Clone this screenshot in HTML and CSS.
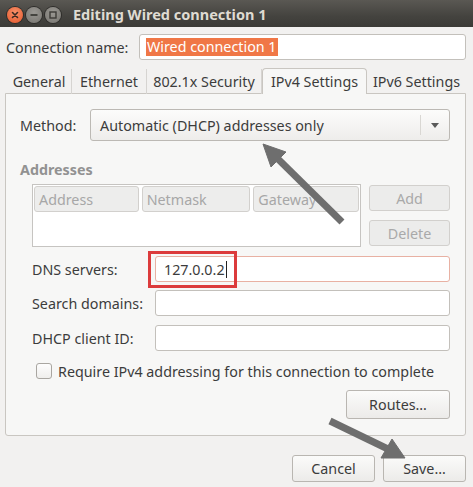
FILE: index.html
```html
<!DOCTYPE html>
<html>
<head>
<meta charset="utf-8">
<link rel="stylesheet" href="styles.css">
</head>
<body>
<div class="window">
  <div class="titlebar">
    <div class="wbtns">
      <span class="wbtn close"><svg width="16" height="16" viewBox="0 0 16 16"><path d="M5.5 5.5 L10.5 10.5 M10.5 5.5 L5.5 10.5" stroke="#3a2a22" stroke-width="1.6" stroke-linecap="round"/></svg></span>
      <span class="wbtn"><svg width="16" height="16" viewBox="0 0 16 16"><path d="M4.5 8 H11.5" stroke="#3c3b37" stroke-width="1.8"/></svg></span>
      <span class="wbtn"><svg width="16" height="16" viewBox="0 0 16 16"><rect x="5" y="5" width="6" height="6" fill="none" stroke="#3c3b37" stroke-width="1.4"/></svg></span>
    </div>
    <div class="title">Editing Wired connection 1</div>
  </div>
  <div class="main">
    <div class="name-row">
      <div class="name-label">Connection name:</div>
      <div class="entry name-entry"><span class="sel">Wired connection 1</span></div>
    </div>
    <div class="notebook">
      <div class="tabs">
        <div class="tab t-general">General</div>
        <div class="tab t-eth">Ethernet</div>
        <div class="tab t-sec">802.1x Security</div>
        <div class="tab active t-v4">IPv4 Settings</div>
        <div class="tab t-v6">IPv6 Settings</div>
      </div>
      <div class="panel">
        <div class="method-row">
          <div class="method-label">Method:</div>
          <div class="combo">
            <span class="combo-text">Automatic (DHCP) addresses only</span>
            <span class="combo-sep"></span>
            <span class="combo-arrow"></span>
          </div>
        </div>
        <div class="section-title">Addresses</div>
        <div class="addr-block">
          <div class="addr-table">
            <div class="addr-head">
              <div class="hcell c1">Address</div>
              <div class="hcell c2">Netmask</div>
              <div class="hcell c3">Gateway</div>
            </div>
          </div>
          <div class="addr-btns">
            <div class="btn disabled">Add</div>
            <div class="btn disabled">Delete</div>
          </div>
        </div>
        <div class="form">
          <div class="frow r1">
            <div class="flabel">DNS servers:</div>
            <div class="entry focus">127.0.0.2<span class="caret"></span></div>
          </div>
          <div class="frow r2">
            <div class="flabel">Search domains:</div>
            <div class="entry"></div>
          </div>
          <div class="frow r3">
            <div class="flabel">DHCP client ID:</div>
            <div class="entry"></div>
          </div>
        </div>
        <div class="check-row">
          <span class="checkbox"></span>
          <span class="check-label">Require IPv4 addressing for this connection to complete</span>
        </div>
        <div class="routes-row">
          <div class="btn routes">Routes…</div>
        </div>
      </div>
    </div>
    <div class="actions">
      <div class="btn act">Cancel</div>
      <div class="btn act">Save…</div>
    </div>
  </div>
  <div class="highlight"></div>
  <svg class="arrows" width="473" height="487" viewBox="0 0 473 487">
    <g fill="#6e6e6e" stroke="#6e6e6e">
      <line x1="342" y1="222" x2="276" y2="157" stroke-width="7"/>
      <polygon points="263,144 286,152 271,167" stroke-width="1"/>
      <line x1="330" y1="421" x2="390" y2="450" stroke-width="7"/>
      <polygon points="405,458 392,439 381,458" stroke-width="1"/>
    </g>
  </svg>
</div>
</body>
</html>
```
FILE: styles.css
```css
* { box-sizing: border-box; }
html, body { margin: 0; padding: 0; }
body {
  font-family: "Noto Sans", "DejaVu Sans", sans-serif;
  font-size: 14.3px;
  color: #3c3c3c;
  background: #f2f1f0;
}
.window {
  position: relative;
  width: 473px;
  height: 487px;
  overflow: hidden;
  background: #f2f1f0;
}
.titlebar {
  height: 27px;
  background: linear-gradient(#5a5853, #44433f 60%, #3c3b37);
  display: flex;
  align-items: center;
}
.wbtns {
  display: flex;
  gap: 3px;
  padding-left: 7px;
  padding-top: 2px;
}
.wbtn {
  width: 16px;
  height: 16px;
  border-radius: 50%;
  background: radial-gradient(circle at 50% 35%, #9a9893, #76746f);
  box-shadow: 0 0 0 1px #2e2d2a;
  display: flex;
}
.wbtn.close {
  background: radial-gradient(circle at 50% 35%, #f8916a, #e4562a);
}
.title {
  margin-left: 12px;
  padding-top: 1px;
  font-weight: bold;
  font-size: 14.5px;
  color: #dfdbd2;
}
.main {
  padding: 7px 7px 0 5px;
}
.name-row {
  display: flex;
  align-items: center;
  height: 26px;
}
.name-label {
  width: 134px;
  padding-left: 1px;
}
.entry {
  flex: 1;
  height: 26px;
  background: #fff;
  border: 1px solid #c3c0bb;
  border-radius: 3px;
  display: flex;
  align-items: center;
  padding-left: 6px;
}
.sel {
  background: #f07746;
  color: #fff;
  line-height: 18px;
  padding: 0 1px;
}
.notebook {
  margin-top: 8px;
}
.tabs {
  display: flex;
  height: 26px;
  padding-left: 2px;
  position: relative;
  z-index: 1;
}
.tab {
  height: 25px;
  margin-top: 1px;
  display: flex;
  align-items: center;
  justify-content: center;
  border-right: 1px solid #d6d4d1;
  color: #3c3c3c;
}
.tab.t-v4 { border-right: none; }
.t-general { width: 65px; }
.t-eth { width: 75px; }
.t-sec { width: 115px; }
.t-v4 {
  width: 105px;
}
.tab.active {
  height: 26px;
  margin-top: 0;
  background: #f7f7f6;
  border: 1px solid #c9c6c1;
  border-bottom: none;
  border-radius: 4px 4px 0 0;
}
.t-v6 { width: 99px; border-right: none; }
.panel {
  margin-top: -1px;
  height: 343px;
  background: #f7f7f6;
  border: 1px solid #c9c6c1;
  border-radius: 0 0 3px 3px;
  padding: 15px 15px 0 14px;
}
.method-row {
  display: flex;
  align-items: center;
  height: 32px;
}
.method-label {
  width: 70px;
}
.combo {
  flex: 1;
  height: 32px;
  border: 1px solid #bcb9b4;
  border-radius: 3px;
  background: linear-gradient(#fcfcfb, #eeedeb);
  display: flex;
  align-items: center;
  padding-left: 9px;
  position: relative;
}
.combo-text { flex: 1; }
.combo-sep {
  width: 1px;
  height: 20px;
  background: #d9d7d3;
  margin-right: 10px;
}
.combo-arrow {
  width: 0; height: 0;
  border-left: 4px solid transparent;
  border-right: 4px solid transparent;
  border-top: 5px solid #5a5a5a;
  margin-right: 10px;
}
.section-title {
  margin-top: 20px;
  font-weight: bold;
  color: #929292;
  height: 18px;
  line-height: 18px;
}
.addr-block {
  margin-top: 5px;
  margin-left: 12px;
  display: flex;
  gap: 8px;
}
.addr-table {
  width: 329px;
  height: 63px;
  background: #fff;
  border: 1px solid #c6c4c1;
  padding: 1px;
}
.addr-head {
  display: flex;
  gap: 3px;
}
.hcell {
  height: 26px;
  background: #ededec;
  border: 1px solid #d2d0cd;
  border-radius: 3px;
  color: #a7a7a7;
  display: flex;
  align-items: center;
  padding-left: 4px;
}
.c1 { width: 105px; }
.c2 { width: 109px; }
.c3 { width: 106px; }
.addr-btns {
  width: 82px;
  display: flex;
  flex-direction: column;
  gap: 9px;
  padding-top: 1px;
}
.btn {
  height: 26px;
  border: 1px solid #b9b6b1;
  border-radius: 3px;
  background: linear-gradient(#fbfbfa, #ecebe9);
  display: flex;
  align-items: center;
  justify-content: center;
  color: #3c3c3c;
}
.btn.disabled {
  background: #ececeb;
  border-color: #d2d0cd;
  color: #a9a9a9;
}
.form {
  margin-top: 9px;
  margin-left: 12px;
}
.frow {
  display: flex;
  align-items: center;
}
.r2 { margin-top: 8px; }
.r3 { margin-top: 9px; }
.flabel { width: 123px; }
.entry.focus {
  border-color: #e8b1a3;
  padding-left: 8px;
}
.caret {
  display: inline-block;
  width: 1px;
  height: 17px;
  background: #222;
  margin-left: 1px;
}
.check-row {
  margin-top: 11px;
  margin-left: 16px;
  display: flex;
  align-items: center;
  height: 18px;
}
.checkbox {
  width: 16px;
  height: 16px;
  border: 1px solid #a9a6a1;
  border-radius: 3px;
  background: linear-gradient(#fdfdfd, #efeeec);
  margin-right: 6px;
}
.routes-row {
  margin-top: 10px;
  display: flex;
  justify-content: flex-end;
}
.btn.routes {
  width: 104px;
  height: 29px;
}
.actions {
  margin-top: 19px;
  display: flex;
  justify-content: flex-end;
  gap: 8px;
}
.btn.act {
  width: 83px;
  height: 27px;
}
.highlight {
  position: absolute;
  left: 148px;
  top: 251px;
  width: 89px;
  height: 37px;
  border: 3px solid #dc3b3c;
}
.arrows {
  position: absolute;
  left: 0;
  top: 0;
  pointer-events: none;
}
```
